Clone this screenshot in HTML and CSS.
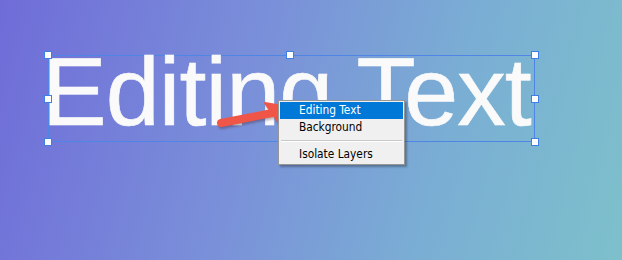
FILE: index.html
```html
<!DOCTYPE html>
<html lang="en">
<head>
    <meta charset="UTF-8">
    <meta name="viewport" content="width=device-width, initial-scale=1.0">
    <title>Editing Text</title>
    <link rel="stylesheet" href="styles.css">
</head>
<body>
    <div class="canvas">
        <div class="text-layer">
            <div class="layer-text">Editing Text</div>
            <span class="handle h-tl"></span>
            <span class="handle h-tm"></span>
            <span class="handle h-tr"></span>
            <span class="handle h-ml"></span>
            <span class="handle h-mr"></span>
            <span class="handle h-bl"></span>
            <span class="handle h-bm"></span>
            <span class="handle h-br"></span>
        </div>

        <svg class="arrow" width="622" height="260" viewBox="0 0 622 260">
            <line x1="221" y1="123" x2="272" y2="113" stroke="#ef5648" stroke-width="8" stroke-linecap="round"/>
            <polygon points="265,103 288,107 280,124" fill="#ef5648" stroke="#ef5648" stroke-width="2" stroke-linejoin="round"/>
        </svg>

        <ul class="context-menu">
            <li class="menu-item active">Editing Text</li>
            <li class="menu-item">Background</li>
            <li class="menu-sep"></li>
            <li class="menu-item">Isolate Layers</li>
        </ul>
    </div>
</body>
</html>
```

FILE: styles.css
```css
html, body {
    margin: 0;
    padding: 0;
}
body {
    font-family: "Liberation Sans", Arial, sans-serif;
}
.canvas {
    position: relative;
    width: 622px;
    height: 260px;
    overflow: hidden;
    background: linear-gradient(105deg, #6f6cd8 0%, #7a90d9 40%, #7aaed4 70%, #7dc0cb 100%);
}
.text-layer {
    position: absolute;
    left: 48px;
    top: 55px;
    width: 485px;
    height: 85px;
    border: 1px solid #4f86e6;
}
.layer-text {
    margin: -13px 0 0 -7px;
    font-size: 97px;
    line-height: 1;
    color: #fafafa;
    white-space: nowrap;
    letter-spacing: -0.9px;
    -webkit-text-stroke: 0.6px #fafafa;
}
.handle {
    position: absolute;
    width: 6px;
    height: 6px;
    background: #fff;
    border: 1px solid #3f7ee4;
}
.h-tl { left: -5px; top: -5px; }
.h-tm { left: 237px; top: -5px; }
.h-tr { right: -5px; top: -5px; }
.h-ml { left: -5px; top: 39px; }
.h-mr { right: -5px; top: 39px; }
.h-bl { left: -5px; bottom: -5px; }
.h-bm { left: 237px; bottom: -5px; }
.h-br { right: -5px; bottom: -5px; }

.arrow {
    position: absolute;
    left: 0;
    top: 0;
    filter: drop-shadow(1px 2px 1px rgba(60, 30, 40, 0.35));
}

.context-menu {
    position: absolute;
    left: 278px;
    top: 100px;
    width: 123px;
    margin: 0;
    padding: 1px;
    list-style: none;
    background: #f0f0f0;
    border: 1px solid #979797;
    box-shadow: 2px 2px 2px rgba(0, 0, 0, 0.3);
    font-family: "DejaVu Sans Condensed", "DejaVu Sans", sans-serif;
    font-size: 11.8px;
    color: #000;
}
.menu-item {
    height: 17px;
    line-height: 16px;
    padding-left: 19px;
}
.menu-item.active {
    background: #0078d7;
    color: #fff;
}
.menu-sep {
    height: 1px;
    margin: 4px 1px 4px 1px;
    background: #c8c8c8;
    border-bottom: 1px solid #fff;
}
```
